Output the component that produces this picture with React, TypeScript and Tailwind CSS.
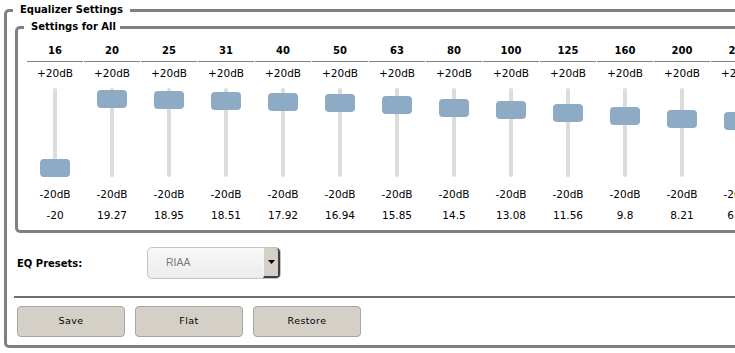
import React from 'react'

type Band = { f: string; v: number }

const bands: Band[] = [
  { f: '16', v: -20 },
  { f: '20', v: 19.27 },
  { f: '25', v: 18.95 },
  { f: '31', v: 18.51 },
  { f: '40', v: 17.92 },
  { f: '50', v: 16.94 },
  { f: '63', v: 15.85 },
  { f: '80', v: 14.5 },
  { f: '100', v: 13.08 },
  { f: '125', v: 11.56 },
  { f: '160', v: 9.8 },
  { f: '200', v: 8.21 },
  { f: '250', v: 6.64 },
  { f: '315', v: 5.15 },
]

function BandSlider({ f, v }: Band) {
  // thumb travels 70px from +20dB (top) to -20dB (bottom)
  const top = 1 + ((20 - v) * 70) / 40

  return (
    <div className="flex w-[56px] shrink-0 flex-col items-center">
      <div className="h-[19px] w-full border-b border-[#808080] pt-[1px] text-center text-[10px] font-bold leading-[14px]">
        {f}
      </div>
      <div className="pt-[4px] leading-[14px]">+20dB</div>
      <div className="relative mt-[8px] flex h-[89px] w-full justify-center">
        <div className="h-full w-[4px] rounded-full bg-[#dcdcdc]" />
        <div
          className="absolute left-[13px] h-[18px] w-[30px] rounded-[4px] bg-[#8eabc6]"
          style={{ top }}
        />
      </div>
      <div className="mt-[10px] leading-[14px]">-20dB</div>
      <div className="mt-[7px] leading-[14px]">{v}</div>
    </div>
  )
}

function ActionButton({ label }: { label: string }) {
  return (
    <button className="h-[31px] w-[108px] rounded-[4px] border border-[#a6a6a6] bg-[#d4d0c8] text-[9.5px] tracking-[0.4px] text-black">
      {label}
    </button>
  )
}

export default function App() {
  return (
    <div className="h-[353px] w-[735px] overflow-hidden bg-white pl-[4px] pt-[3px] font-['DejaVu_Sans',sans-serif] text-[10.5px] text-black">
      {/* Equalizer Settings */}
      <fieldset className="rounded-[5px] border-[3px] border-[#808080]">
        <legend className="ml-[6px] px-[7px] text-[10px] font-bold leading-[14px]">Equalizer Settings</legend>

        {/* Settings for All */}
        <fieldset className="ml-[8px] mt-[3px] rounded-[5px] border-[3px] border-[#808080]">
          <legend className="ml-[6px] pl-[7px] pr-[4px] text-[10px] font-bold leading-[14px]">Settings for All</legend>
          <div className="flex gap-[1px] pb-[8px] pl-[9px] pt-[9px]">
            {bands.map((b) => (
              <BandSlider key={b.f} {...b} />
            ))}
          </div>
        </fieldset>

        {/* Presets */}
        <div className="ml-[10px] mt-[14px] flex h-[32px] items-center">
          <div className="w-[130px] text-[10px] font-bold">EQ Presets:</div>
          <div className="flex h-[32px] w-[134px] overflow-hidden rounded-[5px] border border-[#c4c4c4] bg-gradient-to-b from-[#f8f8f8] to-[#ececec]">
            <div className="flex flex-1 items-center pl-[18px] font-['Liberation_Sans',sans-serif] text-[10.5px] text-[#7a7a7a]">
              RIAA
            </div>
            <div className="flex w-[17px] items-center justify-center rounded-tr-[4px] border-b-2 border-l border-r-2 border-b-[#404040] border-l-[#f4f4f4] border-r-[#404040] bg-[#d4d0c8]">
              <svg width="7" height="4" viewBox="0 0 7 4">
                <path d="M0 0h7L3.5 4z" fill="#000" />
              </svg>
            </div>
          </div>
        </div>

        <div className="ml-[7px] mt-[17px] border-t-2 border-[#6e6e6e]" />

        {/* Buttons */}
        <div className="ml-[10px] mt-[8px] flex gap-[10px] pb-[8px]">
          <ActionButton label="Save" />
          <ActionButton label="Flat" />
          <ActionButton label="Restore" />
        </div>
      </fieldset>
    </div>
  )
}
